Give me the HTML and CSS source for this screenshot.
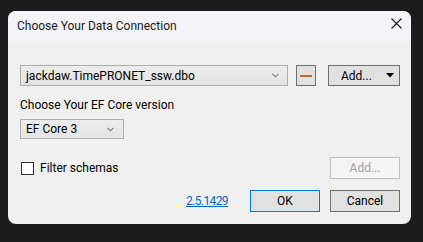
FILE: index.html
```html
<!DOCTYPE html>
<html lang="en">
  <head>
    <meta charset="UTF-8" />
    <title>Choose Your Data Connection</title>
    <link rel="stylesheet" href="styles.css">
  </head>
  <body>
    <div class="window">
      <div class="titlebar">
        <span class="title">Choose Your Data Connection</span>
        <span class="close" title="Close">
          <svg width="11" height="11" viewBox="0 0 11 11">
            <path d="M0.5 0.5 L10.5 10.5 M10.5 0.5 L0.5 10.5" stroke="#1a1a1a" stroke-width="1.1" fill="none" />
          </svg>
        </span>
      </div>

      <div class="content">
        <div class="row connRow">
          <div class="combo connCombo">
            <span>jackdaw.TimePRONET_ssw.dbo</span>
            <svg class="chev" width="7" height="5" viewBox="0 0 7 5">
              <path d="M0.5 0.8 L3.5 3.8 L6.5 0.8" stroke="#777" stroke-width="1.1" fill="none" />
            </svg>
          </div>
          <button class="btn minusBtn"><span class="dash"></span></button>
          <button class="btn addMenuBtn">
            <span>Add...</span>
            <svg width="8" height="5" viewBox="0 0 8 5">
              <path d="M0 0 L8 0 L4 4.5 Z" fill="#000" />
            </svg>
          </button>
        </div>

        <div class="label">Choose Your EF Core version</div>
        <div class="combo efCombo">
          <span>EF Core 3</span>
          <svg class="chev" width="7" height="5" viewBox="0 0 7 5">
            <path d="M0.5 0.8 L3.5 3.8 L6.5 0.8" stroke="#777" stroke-width="1.1" fill="none" />
          </svg>
        </div>

        <div class="row filterRow">
          <label class="check">
            <span class="box"></span>
            <span>Filter schemas</span>
          </label>
          <button class="btn addBtn" disabled>Add...</button>
        </div>

        <div class="row footer">
          <a class="version" href="#">2.5.1429</a>
          <button class="btn okBtn">OK</button>
          <button class="btn cancelBtn">Cancel</button>
        </div>
      </div>
    </div>
  </body>
</html>
```

FILE: styles.css
```css
html,
body {
  margin: 0;
  padding: 0;
  background: #1c1c1c;
  font-family: Roboto, "Noto Sans", sans-serif;
  font-size: 12px;
  color: #000;
}

body {
  padding: 11px 0 0 8px;
}

.window {
  width: 403px;
  height: 213px;
  background: #f0f0f0;
  border-radius: 8px;
  overflow: hidden;
  display: flex;
  flex-direction: column;
}

.titlebar {
  height: 30px;
  background: #f3f3f8;
  display: flex;
  align-items: center;
  justify-content: space-between;
  padding: 0 9px 0 9px;
  flex-shrink: 0;
}

.title {
  color: #1a1a1a;
  margin-top: -1px;
}

.close {
  display: flex;
  margin-top: -6px;
}

.content {
  padding: 24px 11px 0 12px;
}

.row {
  display: flex;
  align-items: center;
}

.combo {
  box-sizing: border-box;
  display: flex;
  align-items: center;
  justify-content: space-between;
  border: 1px solid #adadad;
  background: linear-gradient(#ececec, #e4e4e4);
  padding: 0 8px 0 5px;
}

.connCombo {
  width: 268px;
  height: 21px;
}

.btn {
  box-sizing: border-box;
  font-family: inherit;
  font-size: 12px;
  color: #000;
  background: #e1e1e1;
  border: 1px solid #6f6f6f;
  margin: 0;
  padding: 0;
  height: 22px;
}

.minusBtn {
  width: 20px;
  height: 21px;
  margin-left: 8px;
  display: flex;
  align-items: center;
  justify-content: center;
}

.dash {
  width: 12px;
  height: 2px;
  background: #c8642a;
}

.addMenuBtn {
  width: 72px;
  height: 21px;
  margin-left: 12px;
  display: flex;
  align-items: center;
  justify-content: space-between;
  padding: 0 5px 0 12px;
}

.label {
  margin-top: 11px;
  line-height: 16px;
}

.efCombo {
  width: 104px;
  height: 20px;
  margin-top: 6px;
  padding-right: 9px;
}

.filterRow {
  margin-top: 18px;
  justify-content: space-between;
}

.check {
  display: flex;
  align-items: center;
  gap: 6px;
  margin-left: 1px;
}

.box {
  box-sizing: border-box;
  width: 13px;
  height: 13px;
  border: 1px solid #333;
  background: #fff;
}

.addBtn {
  width: 70px;
  border-color: #bfbfbf;
  background: #f4f4f4;
  color: #a0a0a0;
}

.footer {
  margin-top: 11px;
  justify-content: flex-end;
}

.version {
  color: #0066cc;
  text-decoration: underline;
  letter-spacing: -0.6px;
  margin-right: 22px;
}

.okBtn {
  width: 70px;
  border: 1px solid #0078d7;
}

.cancelBtn {
  width: 70px;
  margin-left: 10px;
}
```
